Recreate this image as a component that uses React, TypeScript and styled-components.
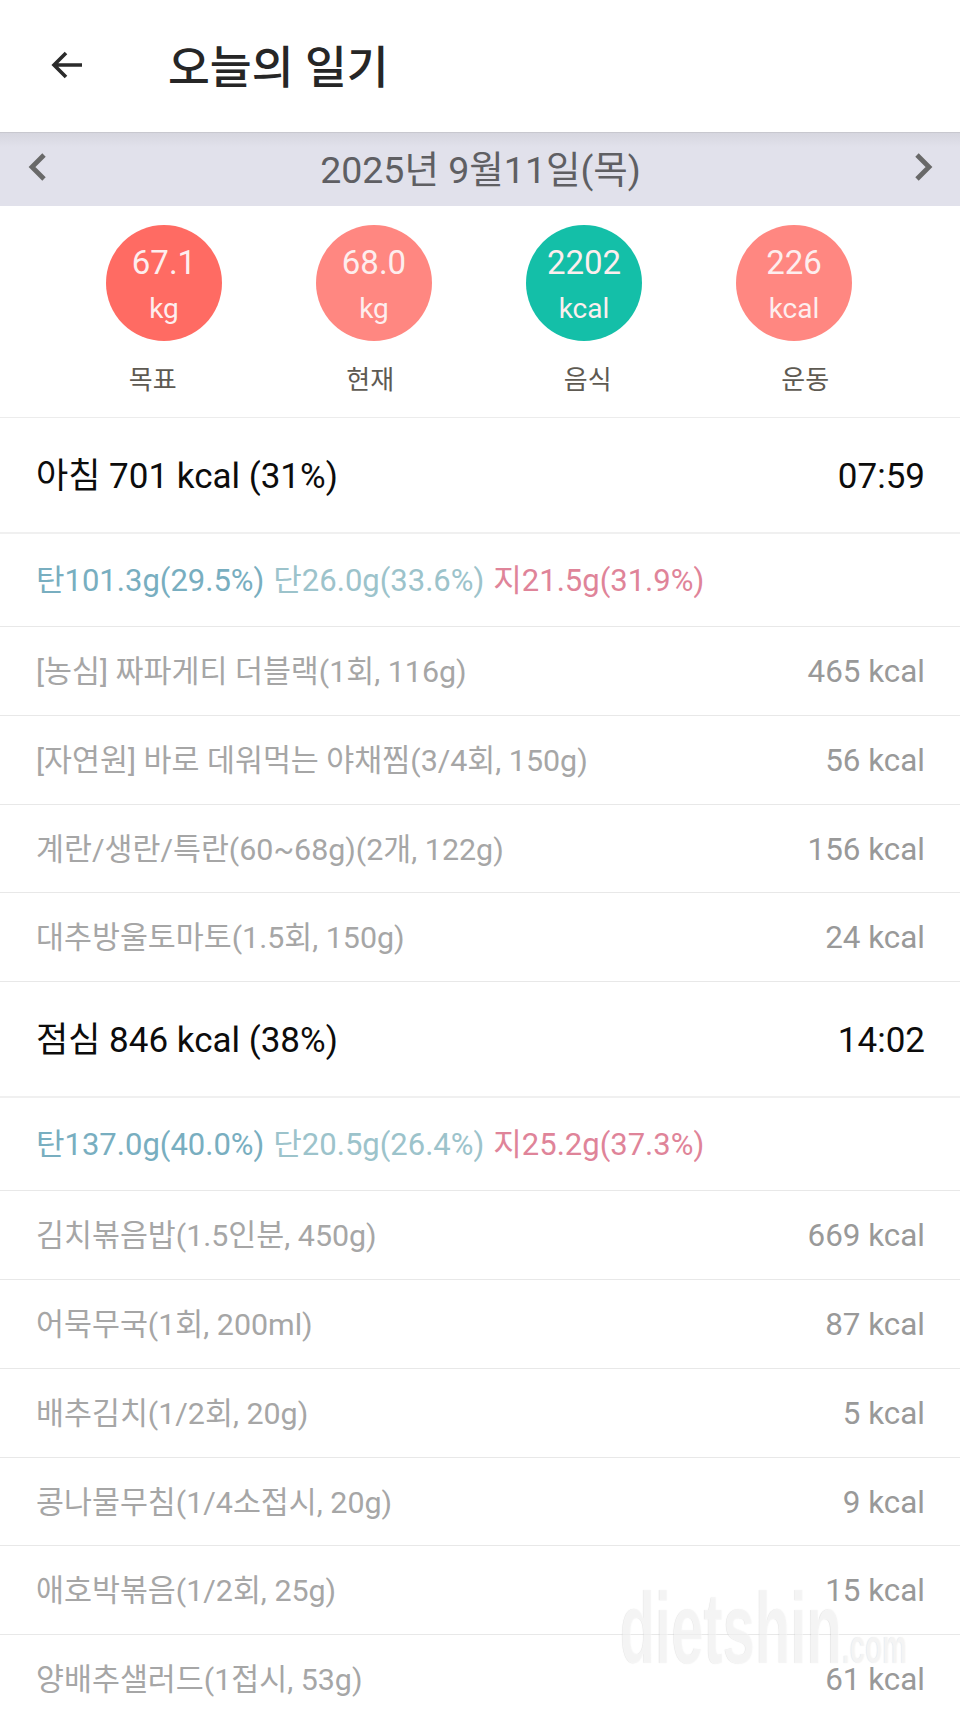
import styled, { createGlobalStyle } from "styled-components"

const GlobalStyle = createGlobalStyle`
  html, body {
    margin: 0;
    padding: 0;
    background: #fff;
  }
  body {
    font-family: Roboto, "Noto Sans CJK KR", sans-serif;
  }
`

const Page = styled.div`
  position: relative;
  width: 960px;
  height: 1720px;
  overflow: hidden;
  background: #fff;
`

const TopBar = styled.header`
  height: 132px;
  display: flex;
  align-items: center;
  padding-left: 48px;
  box-sizing: border-box;
`

const BackIcon = styled.svg`
  width: 38px;
  height: 38px;
  margin-right: 82px;
  margin-top: -2px;
  fill: none;
  stroke: #2b2b2b;
  stroke-width: 3.6;
`

const Title = styled.h1`
  margin: 0;
  margin-top: -4px;
  font-size: 45.5px;
  font-weight: 500;
  color: #262626;
`

const DateBar = styled.div`
  height: 74px;
  display: flex;
  align-items: center;
  justify-content: space-between;
  padding: 0 24px 0 25px;
  box-sizing: border-box;
  background: linear-gradient(#d6d6df 0, #e1e1eb 14px);
  border-top: 1px solid #c8c8cf;
`

const Chevron = styled.svg`
  width: 24px;
  height: 32px;
  margin-top: -6px;
  fill: none;
  stroke: #696969;
  stroke-width: 4.8;
`

const DateText = styled.div`
  font-size: 37.5px;
  line-height: 44px;
  color: #5f5f63;
`

const Stats = styled.section`
  height: 212px;
  padding-top: 19px;
  box-sizing: border-box;
  border-bottom: 1px solid #ececec;
`

const CircleRow = styled.div`
  display: grid;
  grid-template-columns: repeat(4, 210px);
  padding-left: 59px;
`

const Circle = styled.div<{ $color: string }>`
  justify-self: center;
  width: 116px;
  height: 116px;
  border-radius: 50%;
  background: ${(p) => p.$color};
  color: #fdeeee;
  display: flex;
  flex-direction: column;
  align-items: center;
  padding-top: 19px;
  box-sizing: border-box;
`

const CircleValue = styled.div`
  font-size: 33px;
  line-height: 38px;
`

const CircleUnit = styled.div`
  font-size: 28px;
  line-height: 32px;
  margin-top: 11px;
`

const LabelRow = styled.div`
  display: grid;
  grid-template-columns: repeat(4, 217.5px);
  padding-left: 44px;
  margin-top: 21px;
`

const Label = styled.div`
  text-align: center;
  font-size: 26px;
  line-height: 36px;
  color: #5e5a52;
`

const MealRow = styled.div`
  height: 116px;
  display: flex;
  justify-content: space-between;
  padding: 0 35px 0 36px;
  box-sizing: border-box;
  border-bottom: 2px solid #f0f0f0;
  font-size: 35px;
  line-height: 118px;
  color: #0c0c0c;
`

const MacroRow = styled.div`
  height: 93px;
  display: flex;
  gap: 9px;
  padding: 0 0 0 36px;
  box-sizing: border-box;
  border-bottom: 1px solid #e8e8e8;
  font-size: 31px;
  line-height: 94px;
`

const Macro = styled.span<{ $color: string }>`
  color: ${(p) => p.$color};
`

const FoodRow = styled.div`
  height: 88.8px;
  display: flex;
  justify-content: space-between;
  align-items: baseline;
  padding: 0 35px 0 36px;
  box-sizing: border-box;
  border-bottom: 1px solid #e8e8e8;
  font-size: 30.4px;
  line-height: 90px;
  color: #a6a6a6;
`

const FoodCalories = styled.span`
  font-size: 31.4px;
  color: #999;
`

const Watermark = styled.div`
  position: absolute;
  left: 620px;
  top: 1578px;
  display: flex;
  align-items: baseline;
  font-family: "Liberation Sans", sans-serif;
  color: rgba(255, 255, 255, 0.6);
  text-shadow: -1px 0 1px rgba(120, 120, 120, 0.2);
  transform: scaleX(0.58);
  transform-origin: left top;
  pointer-events: none;
`

const WatermarkName = styled.span`
  font-size: 100px;
  line-height: 100px;
  font-weight: 700;
`

const WatermarkDomain = styled.span`
  font-size: 48px;
  line-height: 48px;
  font-weight: 700;
`

type Meal = {
  title: string
  time: string
  macros: string[]
  foods: [string, string][]
}

const macroColors = ["#78aec0", "#9cc3cb", "#df8499"]

const meals: Meal[] = [
  {
    title: "아침 701 kcal (31%)",
    time: "07:59",
    macros: ["탄101.3g(29.5%)", "단26.0g(33.6%)", "지21.5g(31.9%)"],
    foods: [
      ["[농심] 짜파게티 더블랙(1회, 116g)", "465 kcal"],
      ["[자연원] 바로 데워먹는 야채찜(3/4회, 150g)", "56 kcal"],
      ["계란/생란/특란(60~68g)(2개, 122g)", "156 kcal"],
      ["대추방울토마토(1.5회, 150g)", "24 kcal"],
    ],
  },
  {
    title: "점심 846 kcal (38%)",
    time: "14:02",
    macros: ["탄137.0g(40.0%)", "단20.5g(26.4%)", "지25.2g(37.3%)"],
    foods: [
      ["김치볶음밥(1.5인분, 450g)", "669 kcal"],
      ["어묵무국(1회, 200ml)", "87 kcal"],
      ["배추김치(1/2회, 20g)", "5 kcal"],
      ["콩나물무침(1/4소접시, 20g)", "9 kcal"],
      ["애호박볶음(1/2회, 25g)", "15 kcal"],
      ["양배추샐러드(1접시, 53g)", "61 kcal"],
    ],
  },
]

const stats = [
  { value: "67.1", unit: "kg", color: "#ff6b63", label: "목표" },
  { value: "68.0", unit: "kg", color: "#ff8781", label: "현재" },
  { value: "2202", unit: "kcal", color: "#14bfa8", label: "음식" },
  { value: "226", unit: "kcal", color: "#ff8781", label: "운동" },
]

const App = () => {
  return (
    <Page>
      <GlobalStyle />
      <TopBar>
        <BackIcon viewBox="0 0 38 38">
          <path d="M34 19H6M18 7 6 19l12 12" />
        </BackIcon>
        <Title>오늘의 일기</Title>
      </TopBar>
      <DateBar>
        <Chevron viewBox="0 0 24 32">
          <path d="M19 4 7 16l12 12" />
        </Chevron>
        <DateText>2025년 9월11일(목)</DateText>
        <Chevron viewBox="0 0 24 32">
          <path d="M5 4l12 12L5 28" />
        </Chevron>
      </DateBar>
      <Stats>
        <CircleRow>
          {stats.map((s) => (
            <Circle key={s.label} $color={s.color}>
              <CircleValue>{s.value}</CircleValue>
              <CircleUnit>{s.unit}</CircleUnit>
            </Circle>
          ))}
        </CircleRow>
        <LabelRow>
          {stats.map((s) => (
            <Label key={s.label}>{s.label}</Label>
          ))}
        </LabelRow>
      </Stats>
      {meals.map((meal) => (
        <section key={meal.time}>
          <MealRow>
            <span>{meal.title}</span>
            <span>{meal.time}</span>
          </MealRow>
          <MacroRow>
            {meal.macros.map((m, i) => (
              <Macro key={m} $color={macroColors[i]}>
                {m}
              </Macro>
            ))}
          </MacroRow>
          {meal.foods.map(([name, kcal]) => (
            <FoodRow key={name}>
              <span>{name}</span>
              <FoodCalories>{kcal}</FoodCalories>
            </FoodRow>
          ))}
        </section>
      ))}
      <Watermark>
        <WatermarkName>dietshin</WatermarkName>
        <WatermarkDomain>.com</WatermarkDomain>
      </Watermark>
    </Page>
  )
}

export default App
